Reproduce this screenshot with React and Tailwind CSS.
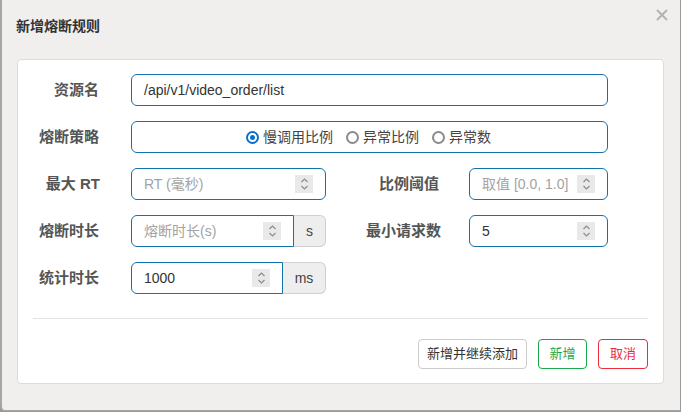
import React from 'react';

const FONT = { fontFamily: '"Liberation Sans", "Noto Sans CJK SC", sans-serif' };

function Spinner() {
  return (
    <span className="flex h-[18px] w-[18px] flex-col items-center justify-center bg-[#e9e9e9]">
      <svg width="9" height="14" viewBox="0 0 9 14" fill="none" stroke="#8c8c8c" strokeWidth="1.2">
        <path d="M1.5 5 L4.5 2 L7.5 5" />
        <path d="M1.5 9 L4.5 12 L7.5 9" />
      </svg>
    </span>
  );
}

function NumberInput({ value, placeholder, className, square }) {
  return (
    <div
      className={
        'flex h-[32px] items-center justify-between border border-[#1273ab] bg-white pl-[12px] pr-[12px] text-[14px] ' +
        (square ? 'rounded-l-[6px] ' : 'rounded-[6px] ') +
        className
      }
    >
      {value ? (
        <span className="text-[#333]">{value}</span>
      ) : (
        <span className="text-[#a3a3a3]">{placeholder}</span>
      )}
      <Spinner />
    </div>
  );
}

function Addon({ children, className }) {
  return (
    <div
      className={
        'flex h-[32px] items-center justify-center rounded-r-[6px] border border-l-0 border-[#cfcfcf] bg-[#eeeeee] text-[14px] text-[#444] ' +
        className
      }
    >
      {children}
    </div>
  );
}

function Label({ children, className }) {
  return (
    <div className={'text-right text-[15px] font-bold text-[#555] ' + className}>{children}</div>
  );
}

function Radio({ checked, children }) {
  return (
    <label className="flex items-center gap-[4px] text-[14px] text-[#444]">
      {checked ? (
        <span className="flex h-[13px] w-[13px] items-center justify-center rounded-full border-[2px] border-[#0b6fc7]">
          <span className="h-[5px] w-[5px] rounded-full bg-[#0b6fc7]" />
        </span>
      ) : (
        <span className="h-[13px] w-[13px] rounded-full border-[2px] border-[#8a8a8a]" />
      )}
      {children}
    </label>
  );
}

export default function App() {
  return (
    <div className="h-[412px] w-[681px] overflow-hidden bg-[#9a9a9a]" style={FONT}>
      <div className="relative h-[411px] w-[680px] rounded-bl-[5px] border-l-[2px] border-b border-[#a5a5a5] bg-[#f0efed]">
        <div className="flex h-[59px] items-start pl-[14px] pt-[16px]">
          <h3 className="text-[14px] font-bold text-[#333]">新增熔断规则</h3>
        </div>
        <button className="absolute right-[12px] top-[9px]">
          <svg width="12" height="12" viewBox="0 0 12 12" stroke="#b3b3b3" strokeWidth="2">
            <path d="M1 1 L11 11 M11 1 L1 11" />
          </svg>
        </button>

        <div className="ml-[15px] w-[647px] rounded-[4px] border border-[#dcdcdc] bg-white pt-[14px] pb-[14px]">
          <div className="flex flex-col gap-[15px]">
            <div className="flex items-center">
              <Label className="w-[81px]">资源名</Label>
              <div className="ml-[32px] flex h-[32px] w-[477px] items-center rounded-[6px] border border-[#1273ab] pl-[12px] text-[14px] text-[#333]">
                /api/v1/video_order/list
              </div>
            </div>

            <div className="flex items-center">
              <Label className="w-[81px]">熔断策略</Label>
              <div className="ml-[32px] flex h-[32px] w-[477px] items-center rounded-[6px] border border-[#1273ab] pl-[114px] gap-[13px]">
                <Radio checked>慢调用比例</Radio>
                <Radio>异常比例</Radio>
                <Radio>异常数</Radio>
              </div>
            </div>

            <div className="flex items-center">
              <Label className="w-[82px]">最大 RT</Label>
              <NumberInput className="ml-[31px] w-[195px]" placeholder="RT (毫秒)" />
              <Label className="w-[113px]">比例阈值</Label>
              <NumberInput className="ml-[30px] w-[139px]" placeholder="取值 [0.0, 1.0]" />
            </div>

            <div className="flex items-center">
              <Label className="w-[81px]">熔断时长</Label>
              <NumberInput square className="ml-[32px] w-[163px]" placeholder="熔断时长(s)" />
              <Addon className="w-[32px]">s</Addon>
              <Label className="w-[115px]">最小请求数</Label>
              <NumberInput className="ml-[28px] w-[139px]" value="5" />
            </div>

            <div className="flex items-center">
              <Label className="w-[81px]">统计时长</Label>
              <NumberInput square className="ml-[32px] w-[152px]" value="1000" />
              <Addon className="w-[43px]">ms</Addon>
            </div>
          </div>

          <div className="mx-[15px] mt-[24px] border-t border-[#e3e3e3]" />

          <div className="mr-[15px] mt-[20px] flex justify-end gap-[11px] text-[13px]">
            <button className="h-[30px] w-[109px] rounded-[4px] border border-[#cccccc] bg-white text-[#333]">
              新增并继续添加
            </button>
            <button className="h-[30px] w-[49px] rounded-[4px] border border-[#1aa84d] bg-white text-[#1aa84d]">
              新增
            </button>
            <button className="h-[30px] w-[50px] rounded-[4px] border border-[#ee2b3b] bg-white text-[#ee2b3b]">
              取消
            </button>
          </div>
        </div>
      </div>
    </div>
  );
}
